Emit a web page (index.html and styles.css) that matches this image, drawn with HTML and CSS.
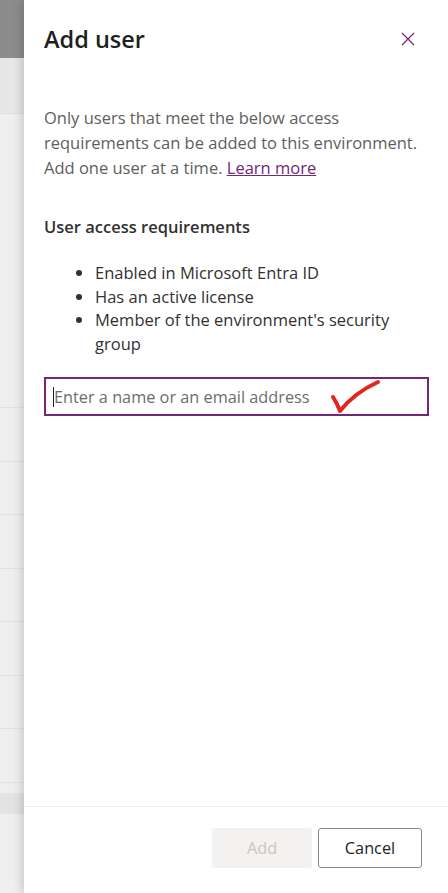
FILE: index.html
```html
<!DOCTYPE html>
<html>
<head>
  <title>Add user</title>
  <link rel="stylesheet" href="styles.css">
</head>
<body>
  <div class="page">
    <div class="backdrop">
      <div class="bd-bar"></div>
      <div class="bd-band"></div>
      <div class="bd-area"></div>
      <div class="bd-row"></div>
      <div class="bd-row"></div>
      <div class="bd-row"></div>
      <div class="bd-row"></div>
      <div class="bd-row"></div>
      <div class="bd-row"></div>
      <div class="bd-row"></div>
      <div class="bd-gap"></div>
      <div class="bd-dark"></div>
      <div class="bd-rest"></div>
    </div>

    <div class="panel">
      <div class="panel-header">
        <h1>Add user</h1>
        <button class="close" aria-label="Close">
          <svg width="14" height="14" viewBox="0 0 14 14">
            <path d="M1 1 L13 13 M13 1 L1 13" stroke="#742774" stroke-width="1.2" fill="none" />
          </svg>
        </button>
      </div>

      <div class="panel-body">
        <p class="intro">
          Only users that meet the below access requirements can be added to this environment.
          Add one user at a time. <a href="#">Learn more</a>
        </p>

        <h2>User access requirements</h2>
        <ul class="reqs">
          <li>Enabled in Microsoft Entra ID</li>
          <li>Has an active license</li>
          <li>Member of the environment's security group</li>
        </ul>

        <div class="search">
          <input type="text" placeholder="Enter a name or an email address" />
          <span class="caret"></span>
          <svg class="check" width="52" height="36" viewBox="0 0 52 36">
            <path d="M3 18 Q7 24 10 32 Q24 14 48 3" stroke="#e3241f" stroke-width="4" fill="none" stroke-linecap="round" stroke-linejoin="round" />
          </svg>
        </div>
      </div>

      <div class="panel-footer">
        <button class="btn btn-add" disabled>Add</button>
        <button class="btn btn-cancel">Cancel</button>
      </div>
    </div>
  </div>
</body>
</html>
```

FILE: styles.css
```css
body, html {
  height: 100%;
  margin: 0;
}

body {
  font-family: "Open Sans", "Noto Sans", sans-serif;
  color: #323130;
}

.page {
  display: flex;
  height: 100%;
}

/* dimmed page behind the side panel */
.backdrop {
  width: 24px;
  flex-shrink: 0;
  display: flex;
  flex-direction: column;
  background: #efefef;
}

.bd-bar {
  height: 58px;
  background: #8c8c8c;
}

.bd-band {
  height: 55px;
  background: #e7e7e7;
  border-bottom: 1px solid #e0e0e0;
}

.bd-area {
  height: 293px;
  border-bottom: 1px solid #e2e2e2;
}

.bd-row {
  height: 52.5px;
  border-bottom: 1px solid #e2e2e2;
}

.bd-gap {
  height: 10px;
}

.bd-dark {
  height: 21px;
  background: #e3e3e3;
}

.bd-rest {
  flex: 1;
}

.panel {
  flex: 1;
  display: flex;
  flex-direction: column;
  background: #fff;
  box-shadow: -2px 0 10px rgba(0, 0, 0, 0.18);
}

.panel-header {
  display: flex;
  justify-content: space-between;
  align-items: flex-start;
  padding: 22px 26px 0 20px;
}

h1 {
  margin: 0;
  font-size: 23.5px;
  font-weight: 600;
  line-height: 34px;
  color: #201f1e;
}

.close {
  border: none;
  background: none;
  padding: 0;
  margin-top: 10px;
  width: 28px;
  height: 14px;
  display: flex;
  justify-content: center;
}

.panel-body {
  flex: 1;
  padding: 0 19px 0 20px;
}

.intro {
  margin: 49px 0 0;
  font-size: 16.5px;
  line-height: 25px;
  color: #605e5c;
}

.intro a {
  color: #742774;
}

h2 {
  margin: 35px 0 0;
  font-size: 16.5px;
  font-weight: 600;
  line-height: 24px;
  color: #323130;
}

.reqs {
  margin: 22px 0 0;
  padding-left: 51px;
  font-size: 16.5px;
  line-height: 23.5px;
  color: #323130;
}

.search {
  position: relative;
  margin-top: 22px;
}

.search input {
  box-sizing: border-box;
  width: 100%;
  height: 39px;
  border: 2px solid #742774;
  padding: 0 8px;
  font-family: inherit;
  font-size: 16.3px;
  color: #323130;
  outline: none;
}

.search input::placeholder {
  color: #6e6c6a;
}

.caret {
  position: absolute;
  left: 9px;
  top: 10px;
  width: 1px;
  height: 20px;
  background: #201f1e;
}

/* red tick drawn over the field */
.check {
  position: absolute;
  left: 286px;
  top: 2px;
}

.panel-footer {
  border-top: 1px solid #edebe9;
  display: flex;
  justify-content: flex-end;
  gap: 6px;
  padding: 21px 26px 25px;
}

.btn {
  height: 40px;
  border-radius: 3px;
  font-family: inherit;
  font-size: 16.3px;
  font-weight: 500;
  padding: 0;
}

.btn-add {
  width: 100px;
  border: none;
  background: #f3f2f1;
  color: #c8c6c4;
}

.btn-cancel {
  width: 104px;
  border: 1px solid #8a8886;
  background: #fff;
  color: #201f1e;
}
```
